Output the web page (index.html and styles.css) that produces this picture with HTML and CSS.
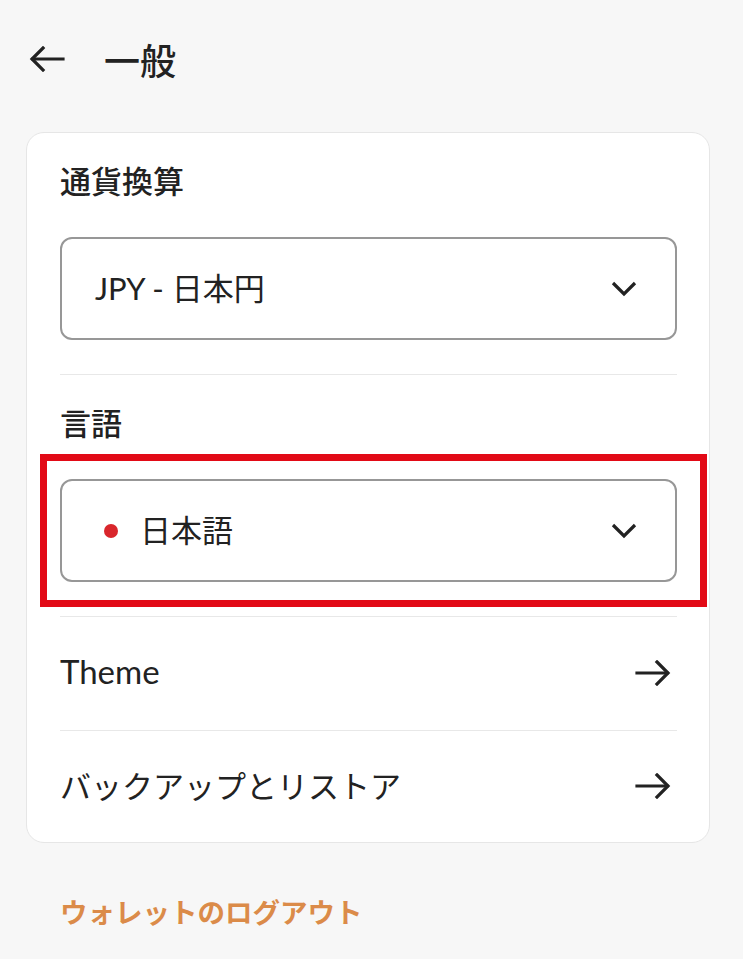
FILE: index.html
```html
<!DOCTYPE html>
<html lang="ja">
  <head>
    <meta charset="UTF-8" />
    <meta name="viewport" content="width=device-width, initial-scale=1.0" />
    <title>一般</title>
    <link rel="stylesheet" href="styles.css">
  </head>
  <body>
    <header class="top-bar">
      <button class="icon-btn back-btn" aria-label="戻る">
        <svg width="36" height="26" viewBox="0 0 36 26" fill="none" stroke="#222" stroke-width="3.2" stroke-linecap="square">
          <path d="M34 13H4" />
          <path d="M14 2L3 13l11 11" />
        </svg>
      </button>
      <h1 class="page-title">一般</h1>
    </header>

    <main class="settings-card">
      <section class="setting-block">
        <h2 class="setting-label">通貨換算</h2>
        <div class="select-box">
          <span class="select-value">JPY - 日本円</span>
          <svg class="chevron" width="26" height="16" viewBox="0 0 26 16" fill="none" stroke="#222" stroke-width="3.2">
            <path d="M2 2l11 11L24 2" />
          </svg>
        </div>
      </section>

      <section class="setting-block">
        <h2 class="setting-label">言語</h2>
        <div class="select-wrap">
          <div class="select-box">
            <span class="select-value"><span class="lang-dot"></span>日本語</span>
            <svg class="chevron" width="26" height="16" viewBox="0 0 26 16" fill="none" stroke="#222" stroke-width="3.2">
              <path d="M2 2l11 11L24 2" />
            </svg>
          </div>
          <!-- highlight marker around the language picker -->
          <div class="highlight-frame"></div>
        </div>
      </section>

      <a class="link-row" href="#">
        <span class="latin">Theme</span>
        <svg width="36" height="26" viewBox="0 0 36 26" fill="none" stroke="#222" stroke-width="3.2" stroke-linecap="square">
          <path d="M2 13h30" />
          <path d="M22 2l11 11-11 11" />
        </svg>
      </a>
      <a class="link-row" href="#">
        <span>バックアップとリストア</span>
        <svg width="36" height="26" viewBox="0 0 36 26" fill="none" stroke="#222" stroke-width="3.2" stroke-linecap="square">
          <path d="M2 13h30" />
          <path d="M22 2l11 11-11 11" />
        </svg>
      </a>
    </main>

    <a class="logout-link" href="#">ウォレットのログアウト</a>
  </body>
</html>
```

FILE: styles.css
```css
body {
  font-family: "Lato", "Noto Sans CJK JP", sans-serif;
  background: #f7f7f7;
  color: #222;
  margin: 0;
  padding: 0 33px 0 26px;
}

.top-bar {
  display: flex;
  align-items: center;
  height: 118px;
}

.icon-btn {
  background: none;
  border: none;
  padding: 0;
  cursor: pointer;
  display: flex;
}

.back-btn {
  margin-left: 3px;
}

.page-title {
  font-size: 36px;
  font-weight: 500;
  margin: 0 0 0 39px;
}

.settings-card {
  margin-top: 14px;
  background: #fff;
  border: 1px solid #e6e6e6;
  border-radius: 18px;
  padding: 0 32px 0 33px;
}

.setting-block {
  padding: 28px 0 34px;
  border-bottom: 1px solid #e8e8e8;
}

.setting-label {
  font-size: 31px;
  font-weight: 500;
  line-height: 40px;
  margin: 0 0 36px;
}

.select-wrap {
  position: relative;
}

.select-box {
  display: flex;
  align-items: center;
  justify-content: space-between;
  height: 103px;
  box-sizing: border-box;
  border: 2px solid #979797;
  border-radius: 12px;
  padding: 0 38px 0 33px;
  font-size: 31px;
  cursor: pointer;
}

.select-value {
  display: flex;
  align-items: center;
  padding-bottom: 4px;
}

.lang-dot {
  width: 14px;
  height: 14px;
  border-radius: 50%;
  background: #d9262c;
  margin: 4px 22px 0 9px;
}

.highlight-frame {
  position: absolute;
  top: -25px;
  bottom: -25px;
  left: -20px;
  right: -30px;
  border: 7px solid #e20a16;
  pointer-events: none;
}

.link-row {
  display: flex;
  align-items: center;
  justify-content: space-between;
  box-sizing: border-box;
  height: 114px;
  padding: 0 6px 5px 0;
  font-size: 31px;
  color: #222;
  text-decoration: none;
  border-bottom: 1px solid #e8e8e8;
}

.link-row svg {
  margin-top: 4px;
}

.link-row .latin {
  font-size: 33px;
}

.link-row:last-child {
  border-bottom: none;
  height: 111px;
}

.logout-link {
  display: block;
  margin: 48px 0 0 34px;
  font-size: 27.5px;
  font-weight: 700;
  color: #db8b49;
  text-decoration: none;
}
```
